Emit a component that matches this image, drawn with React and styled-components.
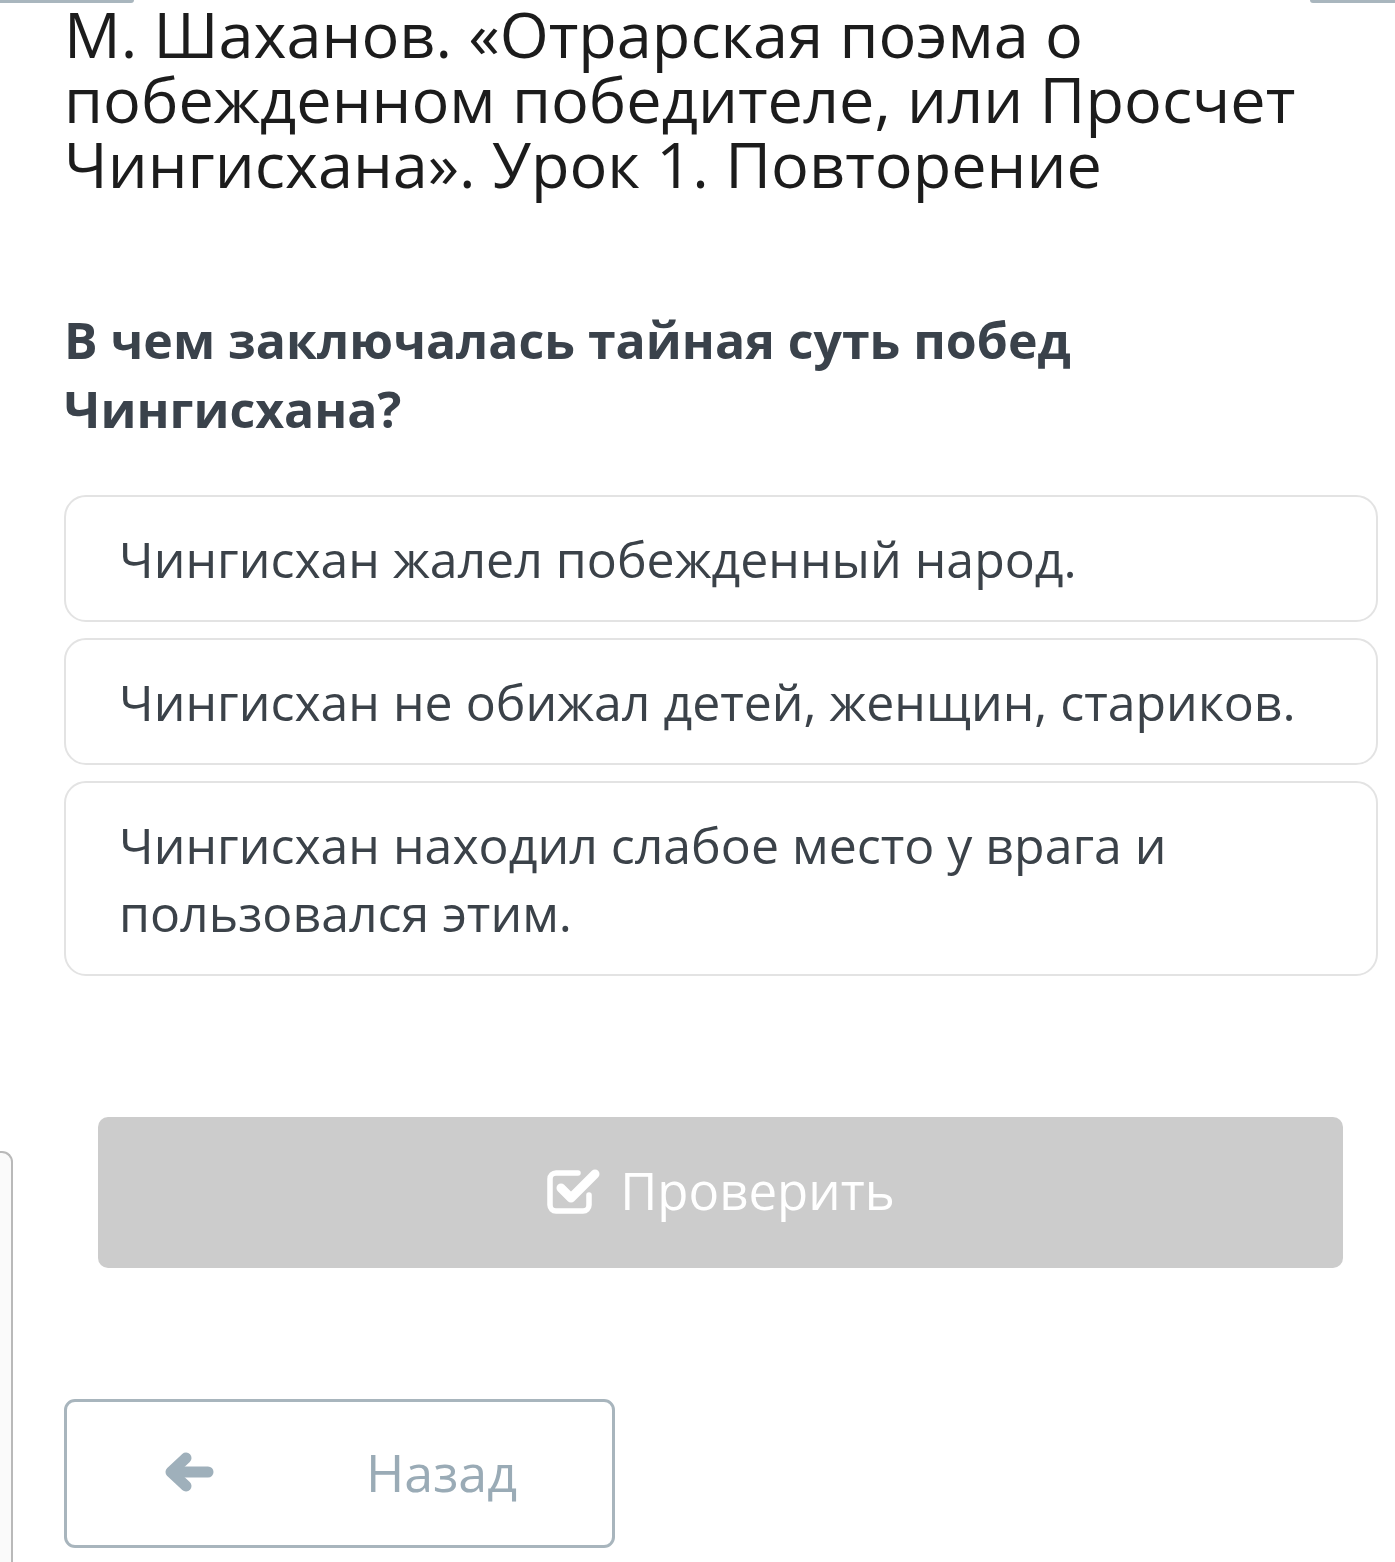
import React from 'react';
import styled, { createGlobalStyle } from 'styled-components';

const GlobalStyle = createGlobalStyle`
  html, body {
    margin: 0;
    padding: 0;
    background: #ffffff;
  }
  body {
    font-family: "Open Sans", "Noto Sans", sans-serif;
  }
  * {
    box-sizing: border-box;
  }
`;

const Page = styled.div`
  position: relative;
  min-height: 1562px;
  padding: 0 17px 0 64px;
  overflow: hidden;
`;

const TopEdge = styled.div`
  display: flex;
  justify-content: space-between;
  margin: 0 -17px 0 -64px;
  height: 0;
`;

const EdgeStub = styled.div`
  width: ${(p) => p.$width}px;
  height: 3px;
  background: #a9b6be;
  border-bottom-${(p) => p.$side}-radius: 3px;
`;

const SidePanel = styled.div`
  position: absolute;
  left: 0;
  top: 1151px;
  bottom: 0;
  width: 13px;
  background: #fafafa;
  border: 2px solid #b9b9b9;
  border-left: none;
  border-bottom: none;
  border-top-right-radius: 11px;
`;

const Title = styled.h1`
  margin: 0;
  padding-top: 1px;
  font-size: 63px;
  line-height: 65px;
  font-weight: 400;
  color: #1c1c1c;
`;

const Question = styled.h2`
  margin: 110px 0 0;
  font-size: 50px;
  line-height: 69px;
  font-weight: 700;
  color: #3a424b;
`;

const Options = styled.div`
  display: flex;
  flex-direction: column;
  gap: 16px;
  margin-top: 51px;
`;

const Option = styled.div`
  border: 2px solid #e3e3e3;
  border-radius: 22px;
  padding: 28px 40px 27px 53px;
  font-size: 50px;
  line-height: 68px;
  color: #3b4249;
  background: #ffffff;
`;

const CheckButton = styled.button`
  display: flex;
  align-items: center;
  justify-content: center;
  gap: 18px;
  width: calc(100% - 69px);
  height: 151px;
  margin: 141px 0 0 34px;
  border: none;
  border-radius: 10px;
  background: #cccccc;
  color: #ffffff;
  font-family: inherit;
  font-size: 51px;
  font-weight: 400;
  padding: 0 0 6px;
`;

const BackButton = styled.button`
  display: flex;
  align-items: center;
  justify-content: center;
  gap: 152px;
  width: 551px;
  height: 149px;
  margin-top: 131px;
  border: 3px solid #a8b5bd;
  border-radius: 11px;
  background: #ffffff;
  color: #9aabb6;
  font-family: inherit;
  font-size: 52px;
  padding: 0 0 4px;
`;

const CheckIcon = () => (
  <svg width="56" height="48" viewBox="0 0 56 48" fill="none">
    <path
      d="M32 7 H10 a6 6 0 0 0 -6 6 v26 a6 6 0 0 0 6 6 h27 a6 6 0 0 0 6 -6 v-10"
      stroke="#ffffff"
      strokeWidth="5.5"
      strokeLinecap="round"
    />
    <polyline
      points="15,22 25,32 49,8"
      stroke="#ffffff"
      strokeWidth="9"
      strokeLinecap="round"
      strokeLinejoin="round"
    />
  </svg>
);

const ArrowIcon = () => (
  <svg width="52" height="42" viewBox="0 0 52 42" fill="none">
    <line x1="10" y1="21" x2="46" y2="21" stroke="#9fb0bb" strokeWidth="11" strokeLinecap="round" />
    <polyline
      points="24,7 9,21 24,35"
      stroke="#9fb0bb"
      strokeWidth="11"
      strokeLinecap="round"
      strokeLinejoin="round"
    />
  </svg>
);

const answers = [
  'Чингисхан жалел побежденный народ.',
  'Чингисхан не обижал детей, женщин, стариков.',
  'Чингисхан находил слабое место у врага и пользовался этим.',
];

const App = () => {
  return (
    <>
      <GlobalStyle />
      <Page>
        <TopEdge>
          <EdgeStub $width={134} $side="right" />
          <EdgeStub $width={85} $side="left" />
        </TopEdge>
        <SidePanel />
        <Title>
          М. Шаханов. «Отрарская поэма о побежденном победителе, или Просчет
          Чингисхана». Урок 1. Повторение
        </Title>
        <Question>В чем заключалась тайная суть побед Чингисхана?</Question>
        <Options>
          {answers.map((a) => (
            <Option key={a}>{a}</Option>
          ))}
        </Options>
        <CheckButton>
          <CheckIcon />
          Проверить
        </CheckButton>
        <BackButton>
          <ArrowIcon />
          Назад
        </BackButton>
      </Page>
    </>
  );
};

export default App;
